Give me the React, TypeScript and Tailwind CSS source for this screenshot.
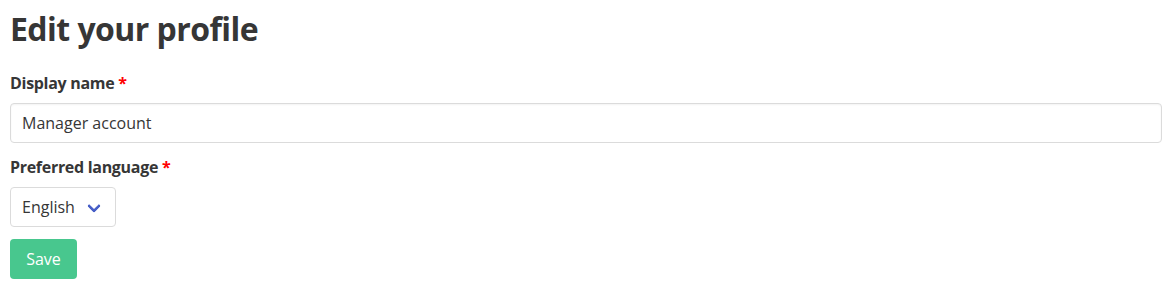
import React from "react";

export default function App() {
  const font = { fontFamily: '"Open Sans", "Noto Sans", sans-serif' };
  return (
    <div className="bg-white w-[1173px] h-[290px] pl-[10px] pr-[11px] pt-[11px] text-[#4a4a4a]" style={font}>
      <h1 className="text-[32px] leading-[36px] font-bold text-[#363636] mb-[24px] tracking-[-0.55px]">Edit your profile</h1>
      <div className="mb-[12px]">
        <label className="block text-[16px] leading-[24px] font-bold text-[#363636] mb-[8px] tracking-[-0.3px]">
          Display name <span className="text-[#ff0000]">*</span>
        </label>
        <input
          className="block w-full h-[40px] border border-[#dbdbdb] rounded-[4px] px-[11px] text-[16px] text-[#363636] shadow-[inset_0_1px_2px_rgba(10,10,10,0.05)] outline-none"
          defaultValue="Manager account"
        />
      </div>
      <div className="mb-[12px]">
        <label className="block text-[16px] leading-[24px] font-bold text-[#363636] mb-[8px] tracking-[-0.3px]">
          Preferred language <span className="text-[#ff0000]">*</span>
        </label>
        <div className="relative inline-flex items-center h-[40px] w-[106px] border border-[#dbdbdb] rounded-[4px] pl-[11px] text-[16px] text-[#363636]">
          English
          <span className="absolute left-[78px] top-[13px] w-[10px] h-[10px] border-[3px] border-[#485fc7] border-t-0 border-r-0 -rotate-45 rounded-[2px]" />
        </div>
      </div>
      <button className="h-[40px] w-[67px] bg-[#48c78e] text-white text-[16px] rounded-[4px]">Save</button>
    </div>
  );
}
